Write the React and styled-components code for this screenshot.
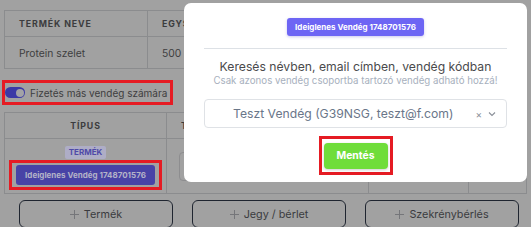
import React from 'react';
import styled, { createGlobalStyle } from 'styled-components';

const GlobalStyle = createGlobalStyle`
  html, body {
    margin: 0;
    padding: 0;
    background: #a1a1a1;
    font-family: Inter, "Noto Sans", sans-serif;
    overflow: hidden;
  }
`;

const Page = styled.div`
  position: relative;
  width: 531px;
  height: 227px;
  padding: 10px 4px 0;
  box-sizing: border-box;
  color: #3a3a3a;
`;

const Table = styled.table`
  border-collapse: collapse;
  width: ${p => p.$width || 523}px;
  table-layout: fixed;
  td, th {
    border: 1px solid #8b8c8e;
    box-sizing: border-box;
  }
`;

const HeadCell = styled.th`
  height: 26px;
  padding: 0 14px;
  font-size: 8.8px;
  font-weight: 700;
  letter-spacing: 0.9px;
  text-transform: uppercase;
  color: #3c3c3e;
  text-align: ${p => p.$align || 'left'};
  white-space: nowrap;
  overflow: hidden;
`;

const Cell = styled.td`
  height: ${p => p.$height || 32}px;
  padding: ${p => p.$pad || '0 14px'};
  font-size: 10.3px;
  color: #3e3e40;
  text-align: ${p => p.$align || 'left'};
  vertical-align: ${p => p.$valign || 'middle'};
  white-space: nowrap;
  overflow: hidden;
`;

const Highlight = styled.div`
  display: ${p => (p.$inline ? 'inline-flex' : 'flex')};
  align-items: center;
  justify-content: center;
  border: 3px solid #e51b23;
  padding: ${p => p.$pad || '0'};
  box-sizing: border-box;
`;

const ToggleRow = styled(Highlight)`
  margin: 11px 0 0 -2px;
  width: 171px;
  height: 25px;
  justify-content: flex-start;
  gap: 5px;
  padding-left: 0;
`;

const Toggle = styled.span`
  position: relative;
  width: 20px;
  height: 11px;
  border-radius: 6px;
  background: #3b39a6;
  &::after {
    content: '';
    position: absolute;
    right: 1.5px;
    top: 1.5px;
    width: 8px;
    height: 8px;
    border-radius: 50%;
    background: #a3a3a6;
  }
`;

const ToggleLabel = styled.span`
  font-size: 10px;
  color: #3e3e40;
  white-space: nowrap;
`;

const TypeStack = styled.div`
  display: flex;
  flex-direction: column;
  align-items: center;
  gap: 1px;
`;

const TypeBadge = styled.span`
  padding: 1px 4px;
  font-size: 8px;
  font-weight: 700;
  color: #4f4aa8;
  background: #aeadc6;
  border-radius: 2px;
  line-height: 11px;
`;

const GuestButton = styled.span`
  display: inline-block;
  padding: 0 9px;
  height: 20px;
  line-height: 20px;
  border-radius: 3px;
  background: #4843a6;
  color: #b4b3c8;
  font-size: 8px;
  font-weight: 700;
  white-space: nowrap;
`;

const GhostInput = styled.div`
  width: 60px;
  height: 27px;
  margin-left: -2px;
  border: 1px solid #8d8d8f;
  border-radius: 4px;
`;

const ActionRow = styled.div`
  display: grid;
  grid-template-columns: repeat(3, 154px);
  gap: 19px;
  padding: 6px 15px 0;
`;

const ActionButton = styled.button`
  height: 28px;
  border: 1px solid #1f2530;
  border-radius: 6px;
  background: transparent;
  font-family: Inter, "Noto Sans", sans-serif;
  font-size: 10.8px;
  color: #3a3b3e;
  display: flex;
  align-items: center;
  justify-content: center;
  gap: 5px;
`;

const Modal = styled.div`
  position: absolute;
  left: 184px;
  top: 3px;
  width: 343px;
  height: 179px;
  background: #fff;
  border-radius: 7px;
  padding: 15px 20px 0;
  box-sizing: border-box;
  display: flex;
  flex-direction: column;
  align-items: center;
`;

const ModalBadge = styled.span`
  height: 18px;
  line-height: 18px;
  padding: 0 8px;
  border-radius: 3px;
  background: #6d65f4;
  color: #fff;
  font-size: 8px;
  font-weight: 700;
  white-space: nowrap;
  box-shadow: 0 1px 3px rgba(80, 70, 200, 0.3);
`;

const Divider = styled.hr`
  width: 100%;
  margin: 12px 0 0;
  border: none;
  border-top: 1px solid #dde1e6;
`;

const Title = styled.div`
  margin-top: 10px;
  font-size: 12.2px;
  line-height: 16px;
  color: #4a4a4c;
  white-space: nowrap;
`;

const Hint = styled.div`
  font-size: 9.7px;
  line-height: 12px;
  color: #a7b0bd;
  white-space: nowrap;
`;

const Select = styled.div`
  margin-top: 12px;
  width: 100%;
  height: 29px;
  border: 1px solid #dfe2e6;
  border-radius: 4px;
  box-sizing: border-box;
  display: flex;
  align-items: center;
  padding: 0 10px 0 28px;
`;

const SelectValue = styled.span`
  flex: 1;
  font-size: 12.2px;
  color: #6a7689;
  white-space: nowrap;
`;

const Indicator = styled.span`
  color: #8a8f98;
  font-size: 10px;
  display: flex;
  align-items: center;
  gap: 6px;
`;

const SaveWrap = styled(Highlight)`
  margin-top: 8px;
  width: 74px;
  height: 39px;
`;

const SaveButton = styled.button`
  width: 64px;
  height: 26px;
  border: none;
  border-radius: 4px;
  background: #6fdd3a;
  color: #fff;
  font-family: Inter, "Noto Sans", sans-serif;
  font-weight: 700;
  font-size: 10.4px;
  box-shadow: 0 1px 3px rgba(0, 0, 0, 0.2);
`;

const Plus = () => (
  <svg width="9" height="9" viewBox="0 0 9 9">
    <path d="M4.5 0v9M0 4.5h9" stroke="#75767a" strokeWidth="1" />
  </svg>
);

const Chevron = () => (
  <svg width="8" height="6" viewBox="0 0 8 6">
    <path d="M1 1.5l3 3 3-3" fill="none" stroke="#8a8f98" strokeWidth="1.1" />
  </svg>
);

const App = () => {
  return (
    <Page>
      <GlobalStyle />
      <Table $width={340}>
        <colgroup>
          <col style={{ width: 143 }} />
          <col />
        </colgroup>
        <thead>
          <tr>
            <HeadCell>Termék neve</HeadCell>
            <HeadCell>Egységár</HeadCell>
          </tr>
        </thead>
        <tbody>
          <tr>
            <Cell>Protein szelet</Cell>
            <Cell>500</Cell>
          </tr>
        </tbody>
      </Table>

      <ToggleRow>
        <Toggle />
        <ToggleLabel>Fizetés más vendég számára</ToggleLabel>
      </ToggleRow>

      <Table style={{ marginTop: 7 }}>
        <colgroup>
          <col style={{ width: 162 }} />
          <col style={{ width: 202 }} />
          <col style={{ width: 100 }} />
          <col />
        </colgroup>
        <thead>
          <tr>
            <HeadCell $align="center">Típus</HeadCell>
            <HeadCell>Tétel</HeadCell>
            <HeadCell>Ár</HeadCell>
            <HeadCell>Érték</HeadCell>
          </tr>
        </thead>
        <tbody>
          <tr>
            <Cell $height={55} $pad="7px 0 3px" $align="center" $valign="top">
              <TypeStack>
                <TypeBadge>TERMÉK</TypeBadge>
                <Highlight $inline $pad="2px 4px">
                  <GuestButton>Ideiglenes Vendég 1748701576</GuestButton>
                </Highlight>
              </TypeStack>
            </Cell>
            <Cell $height={55}>
              <GhostInput />
            </Cell>
            <Cell $height={55} />
            <Cell $height={55} />
          </tr>
        </tbody>
      </Table>

      <ActionRow>
        <ActionButton>
          <Plus /> Termék
        </ActionButton>
        <ActionButton>
          <Plus /> Jegy / bérlet
        </ActionButton>
        <ActionButton>
          <Plus /> Szekrénybérlés
        </ActionButton>
      </ActionRow>

      <Modal>
        <ModalBadge>Ideiglenes Vendég 1748701576</ModalBadge>
        <Divider />
        <Title>Keresés névben, email címben, vendég kódban</Title>
        <Hint>Csak azonos vendég csoportba tartozó vendég adható hozzá!</Hint>
        <Select>
          <SelectValue>Teszt Vendég (G39NSG, teszt@f.com)</SelectValue>
          <Indicator>
            ×
            <Chevron />
          </Indicator>
        </Select>
        <SaveWrap>
          <SaveButton>Mentés</SaveButton>
        </SaveWrap>
      </Modal>
    </Page>
  );
};

export default App;
